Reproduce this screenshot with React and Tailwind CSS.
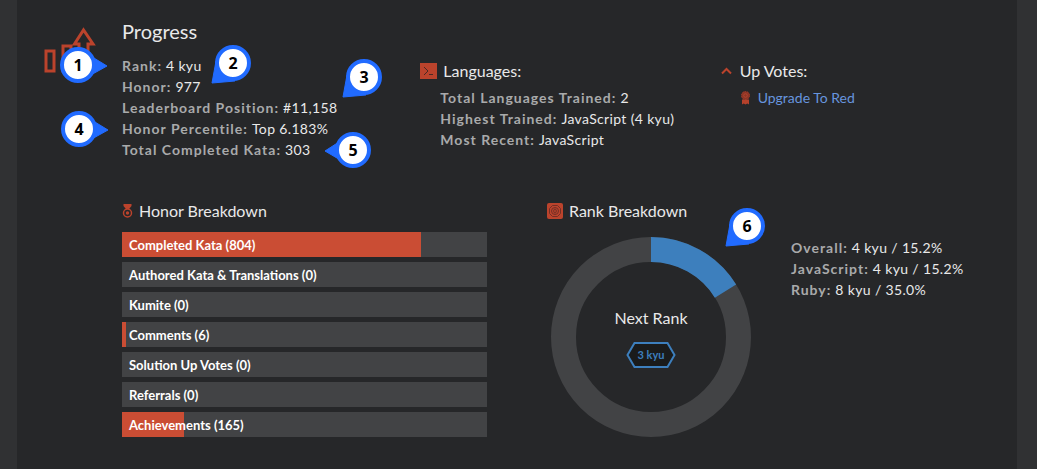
import React from "react";

function Stat({ label, children }) {
  return (
    <div className="flex gap-1 whitespace-nowrap">
      <dt className="font-bold tracking-[1px] text-[#a9aaab]">{label}:</dt>
      <dd className="tracking-wide text-[#e9e9e9]">{children}</dd>
    </div>
  );
}

function StatList({ items, className = "" }) {
  return (
    <dl className={`text-sm leading-[21px] ${className}`}>
      {items.map(([label, value]) => (
        <Stat key={label} label={label}>
          {value}
        </Stat>
      ))}
    </dl>
  );
}

const progress = [
  ["Rank", "4 kyu"],
  ["Honor", "977"],
  ["Leaderboard Position", "#11,158"],
  ["Honor Percentile", "Top 6.183%"],
  ["Total Completed Kata", "303"],
];

const languages = [
  ["Total Languages Trained", "2"],
  ["Highest Trained", "JavaScript (4 kyu)"],
  ["Most Recent", "JavaScript"],
];

const ranks = [
  ["Overall", "4 kyu / 15.2%"],
  ["JavaScript", "4 kyu / 15.2%"],
  ["Ruby", "8 kyu / 35.0%"],
];

const honor = [
  ["Completed Kata", 804, 82],
  ["Authored Kata & Translations", 0, 0],
  ["Kumite", 0, 0],
  ["Comments", 6, 1],
  ["Solution Up Votes", 0, 0],
  ["Referrals", 0, 0],
  ["Achievements", 165, 17],
];

function ProgressIcon() {
  return (
    <svg width="52" height="46" viewBox="0 0 52 46" fill="none" stroke="#bb432c" strokeWidth="3" aria-hidden="true">
      <rect x="2" y="24" width="8" height="20" />
      <rect x="19" y="19" width="8" height="25" />
      <path d="M35 44V17H30.500L39.500 3L49 17H44V44Z" />
    </svg>
  );
}

function TerminalIcon() {
  return (
    <svg width="17" height="16" viewBox="0 0 17 16" aria-hidden="true">
      <rect width="17" height="16" fill="#bb432c" />
      <path d="M4 4L8 8L4 12M9 11.500H13" fill="none" stroke="#4b2925" strokeWidth="1" />
    </svg>
  );
}

function ChevronIcon() {
  return (
    <svg width="11" height="8" viewBox="0 0 11 8" aria-hidden="true">
      <path d="M1 6.500L5.500 2L10 6.500" fill="none" stroke="#bb432c" strokeWidth="2" />
    </svg>
  );
}

function RibbonIcon() {
  return (
    <svg width="9" height="14" viewBox="0 0 9 14" aria-hidden="true">
      <circle cx="4.500" cy="4.500" r="4" fill="#8b3526" stroke="#a83c29" strokeDasharray="1.500 1" />
      <circle cx="4.500" cy="4.500" r="1.800" fill="none" stroke="#b9452f" strokeWidth="0.800" />
      <path d="M1 8.500H8V13.500L6.300 12.500L4.500 13.500L2.700 12.500L1 13.500Z" fill="#b5412b" />
    </svg>
  );
}

function MedalIcon() {
  return (
    <svg width="11" height="14" viewBox="0 0 11 14" aria-hidden="true">
      <path d="M1.500 0H9.500V2L7 5H4L1.500 2Z" fill="#bb432c" />
      <circle cx="5.500" cy="9" r="4" fill="none" stroke="#bb432c" strokeWidth="1.500" />
      <circle cx="5.500" cy="9" r="1.700" fill="#bb432c" />
    </svg>
  );
}

function TargetIcon() {
  return (
    <svg width="16" height="16" viewBox="0 0 16 16" aria-hidden="true">
      <rect width="16" height="16" rx="2" fill="#bb432c" />
      <g fill="none" stroke="#742f25">
        <path d="M5.500 2.500H10.500L13.500 5.500V10.500L10.500 13.500H5.500L2.500 10.500V5.500Z" />
        <circle cx="8" cy="8" r="3.500" />
        <ellipse cx="8" cy="8" rx="1.300" ry="2" />
      </g>
    </svg>
  );
}

function Heading({ icon, gap = "gap-1.5", children }) {
  return (
    <h3 className={`flex items-center text-base leading-6 text-[#e9e9e9] ${gap}`}>
      {icon}
      {children}
    </h3>
  );
}

function RankDonut() {
  return (
    <div className="grid size-[200px] shrink-0 place-items-center">
      <svg className="col-start-1 row-start-1" width="200" height="200" viewBox="0 0 200 200" aria-hidden="true">
        <circle cx="100" cy="100" r="87.500" fill="none" stroke="#424345" strokeWidth="25" />
        <circle
          cx="100"
          cy="100"
          r="87.500"
          fill="none"
          stroke="#3d7fbd"
          strokeWidth="25"
          pathLength="100"
          strokeDasharray="16.200 83.800"
          transform="rotate(-90 100 100)"
        />
      </svg>
      <div className="col-start-1 row-start-1 flex flex-col items-center gap-3 text-[#e9e9e9]">
        <span className="text-base leading-6">Next Rank</span>
        <span className="grid place-items-center">
          <svg className="col-start-1 row-start-1" width="50" height="26" viewBox="0 0 50 26" aria-hidden="true">
            <path d="M8.500 1H41.500L48.500 13L41.500 25H8.500L1.500 13Z" fill="#1a1b1b" stroke="#3d7fbd" strokeWidth="2" />
          </svg>
          <span className="col-start-1 row-start-1 text-[11px] leading-4 font-bold text-[#3d7fbd]">3 kyu</span>
        </span>
      </div>
    </div>
  );
}

const tails = {
  right: "M29 8L47 19L29 29Z",
  left: "M7 8L-10 19L7 29Z",
  lower: "M1 16L-3 38L20 36Z",
};

function Callout({ n, tail, className }) {
  return (
    <div className={`absolute grid size-9 place-items-center ${className}`}>
      <svg className="col-start-1 row-start-1 overflow-visible" width="36" height="36" viewBox="0 0 36 36" aria-hidden="true">
        <path d={tails[tail]} fill="#216bff" stroke="#216bff" strokeLinejoin="round" />
        <circle cx="18" cy="18" r="16" fill="#fff" stroke="#216bff" strokeWidth="4" />
      </svg>
      <span className="col-start-1 row-start-1 font-['Open_Sans',sans-serif] text-base leading-6 font-bold text-black">{n}</span>
    </div>
  );
}

export default function App() {
  return (
    <div className="min-h-screen bg-[#303133] px-[17px] pr-5 font-[Lato,sans-serif]">
      <main className="relative flex min-h-screen bg-[#262729] pt-[19px] pb-8">
        <div className="w-[105px] shrink-0 pt-2 pl-[27px]">
          <ProgressIcon />
        </div>

        <div className="min-w-0 flex-1">
          <section className="grid grid-cols-3">
            <div>
              <h2 className="text-xl leading-6 text-[#e9e9e9]">Progress</h2>
              <StatList items={progress} className="mt-3" />
            </div>
            <div className="pt-10">
              <Heading icon={<TerminalIcon />}>Languages:</Heading>
              <StatList items={languages} className="mt-1 pl-5" />
            </div>
            <div className="pt-10 pl-0.5">
              <Heading icon={<ChevronIcon />} gap="gap-2">
                Up Votes:
              </Heading>
              <a href="#upgrade" className="mt-1 flex items-center gap-2 pl-5 text-sm leading-[21px] text-[#6795de]">
                <RibbonIcon />
                Upgrade To Red
              </a>
            </div>
          </section>

          <section className="mt-[39px] grid grid-cols-[365fr_470fr] gap-[60px]">
            <div>
              <Heading icon={<MedalIcon />}>Honor Breakdown</Heading>
              <ul className="mt-[9px] flex flex-col gap-[5px]">
                {honor.map(([label, count, fill]) => (
                  <li key={label} className="grid h-[25px] items-center bg-[#424345]">
                    <span className="col-start-1 row-start-1 h-full bg-[#ca4d34]" style={{ width: `${fill}%` }} />
                    <span className="col-start-1 row-start-1 px-[7px] text-[13px] leading-4 font-bold text-white">
                      {label} ({count})
                    </span>
                  </li>
                ))}
              </ul>
            </div>
            <div>
              <Heading icon={<TargetIcon />}>Rank Breakdown</Heading>
              <div className="mt-[14px] flex gap-10 pl-1">
                <RankDonut />
                <StatList items={ranks} />
              </div>
            </div>
          </section>
        </div>

        <Callout n={1} tail="right" className="top-[47px] left-[43px]" />
        <Callout n={2} tail="lower" className="top-[45px] left-[198px]" />
        <Callout n={3} tail="lower" className="top-[59px] left-[329px]" />
        <Callout n={4} tail="right" className="top-[111px] left-[44px]" />
        <Callout n={5} tail="left" className="top-[132px] left-[318px]" />
        <Callout n={6} tail="lower" className="top-[208px] left-[712px]" />
      </main>
    </div>
  );
}
